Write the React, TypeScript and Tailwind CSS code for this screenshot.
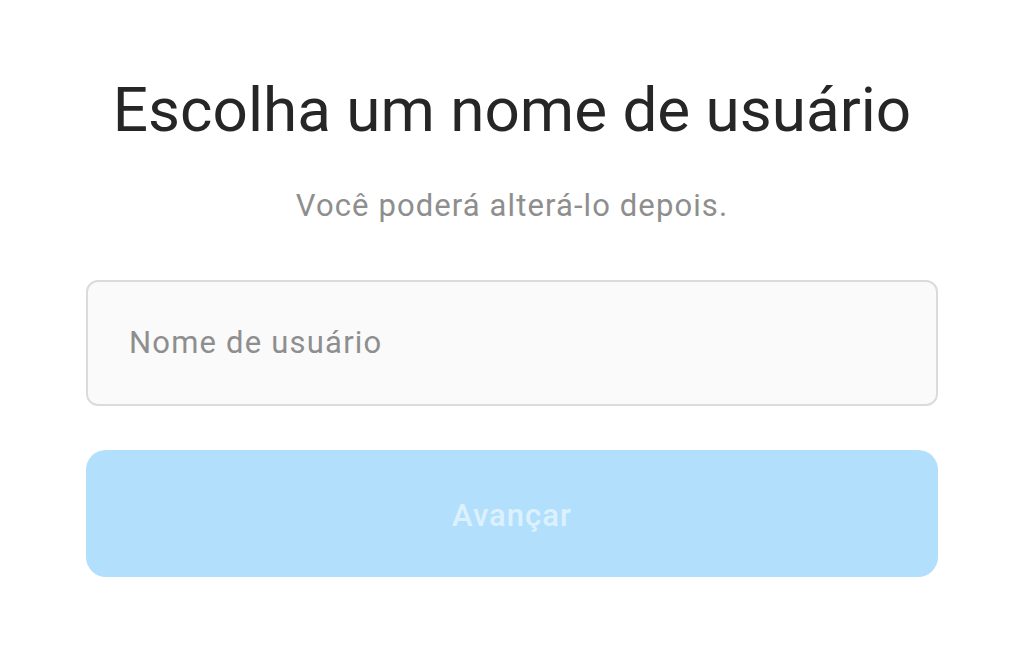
import React, { useState } from 'react';

const App: React.FC = () => {
  const [username, setUsername] = useState('');

  return (
    <div className="min-h-screen w-full bg-white font-['Roboto',sans-serif]">
      <div className="mx-auto flex w-[852px] flex-col items-center pt-[70px]">
        {/* Heading */}
        <h1 className="text-[62px] leading-[80px] text-[#262626] whitespace-nowrap">
          Escolha um nome de usuário
        </h1>
        <p className="mt-[36px] text-[31px] leading-[40px] tracking-[1.1px] text-[#8e8e8e]">
          Você poderá alterá-lo depois.
        </p>

        {/* Username field */}
        <input
          value={username}
          onChange={e => setUsername(e.target.value)}
          placeholder="Nome de usuário"
          className="mt-[54px] h-[126px] w-full rounded-[12px] border-2 border-[#dbdbdb] bg-[#fafafa] px-[41px] pb-[2px] text-[31px] tracking-[1.2px] text-[#262626] placeholder:text-[#8e8e8e] outline-none"
        />

        {/* Next */}
        <button
          disabled={!username}
          className="mt-[44px] h-[127px] w-full rounded-[20px] bg-[#b2dffc] pt-[6px] text-[31px] font-medium tracking-[1px] text-white/55"
        >
          Avançar
        </button>
      </div>
    </div>
  );
};

export default App;
